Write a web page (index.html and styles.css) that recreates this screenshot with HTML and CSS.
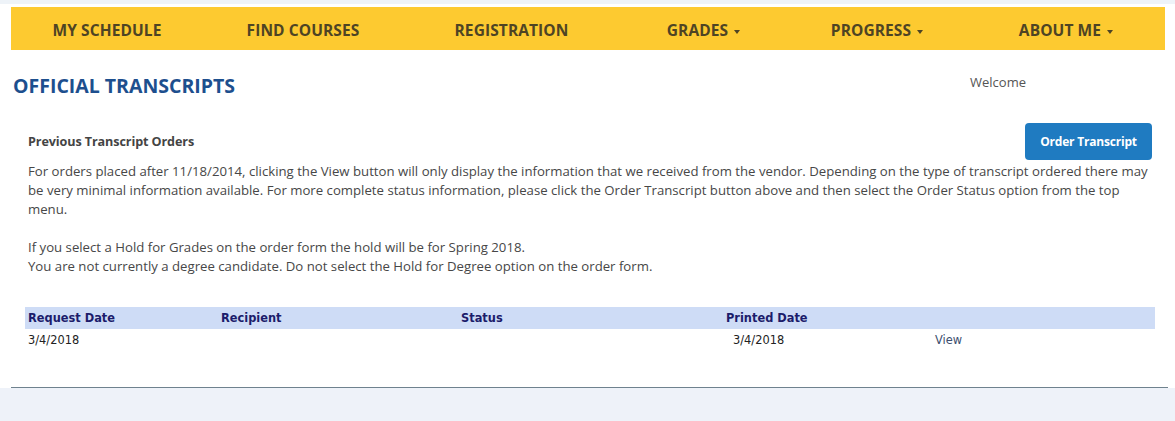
FILE: index.html
```html
<!DOCTYPE html>
<html>
<head>
<meta charset="utf-8">
<link rel="stylesheet" href="styles.css">
</head>
<body>
<div class="topstrip"></div>
<nav class="navbar">
  <a class="nav-item">MY SCHEDULE</a>
  <a class="nav-item">FIND COURSES</a>
  <a class="nav-item">REGISTRATION</a>
  <a class="nav-item">GRADES<span class="caret"></span></a>
  <a class="nav-item">PROGRESS<span class="caret"></span></a>
  <a class="nav-item">ABOUT ME<span class="caret"></span></a>
</nav>
<div class="page">
  <div class="title-row">
    <h1 class="page-title">OFFICIAL TRANSCRIPTS</h1>
    <div class="welcome">Welcome</div>
  </div>
  <section class="content">
    <div class="orders-head">
      <h2 class="orders-title">Previous Transcript Orders</h2>
      <button class="btn-order">Order Transcript</button>
    </div>
    <p class="note">For orders placed after 11/18/2014, clicking the View button will only display the information that we received from the vendor. Depending on the type of transcript ordered there may be very minimal information available. For more complete status information, please click the Order Transcript button above and then select the Order Status option from the top menu.</p>
    <p class="note note-2">If you select a Hold for Grades on the order form the hold will be for Spring 2018.<br>You are not currently a degree candidate. Do not select the Hold for Degree option on the order form.</p>
    <table class="orders">
      <thead>
        <tr>
          <th class="c1">Request Date</th>
          <th class="c2">Recipient</th>
          <th class="c3">Status</th>
          <th class="c4">Printed Date</th>
          <th class="c5"></th>
        </tr>
      </thead>
      <tbody>
        <tr>
          <td class="c1">3/4/2018</td>
          <td class="c2"></td>
          <td class="c3"></td>
          <td class="c4 printed">3/4/2018</td>
          <td class="c5"><a class="view">View</a></td>
        </tr>
      </tbody>
    </table>
  </section>
</div>
<div class="divider"></div>
<div class="footer-bg"></div>
</body>
</html>
```

FILE: styles.css
```css
html, body {
  margin: 0;
  padding: 0;
  background: #ffffff;
  font-family: "Open Sans", "Noto Sans", sans-serif;
}

.topstrip {
  height: 4px;
  background: #eef3f8;
}

.navbar {
  margin: 3px 10px 0 11px;
  height: 43px;
  padding-top: 3px;
  box-sizing: border-box;
  background: #fdca30;
  display: grid;
  grid-template-columns: 192px 200px 217px 167px 180px 198px;
  align-items: center;
}

.nav-item {
  text-align: center;
  font-weight: 700;
  font-size: 15.5px;
  color: #4e4424;
  letter-spacing: 0.1px;
  white-space: nowrap;
}

.caret {
  display: inline-block;
  width: 0;
  height: 0;
  margin-left: 6px;
  vertical-align: middle;
  border-top: 4px solid #4e4424;
  border-left: 3.5px solid transparent;
  border-right: 3.5px solid transparent;
}

.page {
  padding: 0 20px 0 13px;
}

.title-row {
  display: flex;
  align-items: flex-start;
  margin-top: 22px;
}

.page-title {
  margin: 0;
  font-size: 19.5px;
  font-weight: 700;
  color: #1d4f8e;
  flex: 1;
}

.welcome {
  margin-right: 129px;
  margin-top: 1px;
  font-size: 13px;
  color: #555555;
}

.content {
  padding: 0 0 0 15px;
}

.orders-head {
  display: flex;
  justify-content: space-between;
  align-items: center;
  margin-top: 24px;
}

.orders-title {
  margin: 0;
  font-size: 12.6px;
  font-weight: 700;
  color: #444444;
  letter-spacing: -0.1px;
}

.btn-order {
  width: 127px;
  height: 37px;
  margin-right: 3px;
  border: none;
  border-radius: 4px;
  background: #1f7bc1;
  color: #ffffff;
  font-family: "Open Sans", "Noto Sans", sans-serif;
  font-weight: 700;
  font-size: 12px;
  letter-spacing: -0.2px;
}

.note {
  margin: 2px 0 0 0;
  max-width: 1125px;
  font-size: 13.2px;
  line-height: 19px;
  color: #474747;
}

.note-2 {
  margin-top: 19px;
}

.orders {
  margin-top: 31px;
  margin-left: -3px;
  width: 1130px;
  border-collapse: collapse;
  font-family: "DejaVu Sans", Verdana, sans-serif;
  font-size: 11.4px;
}

.orders th {
  background: #cedcf6;
  color: #1c1c6b;
  font-weight: 700;
  text-align: left;
  height: 22px;
  padding: 0 0 0 3px;
}

.orders td {
  color: #222222;
  height: 22px;
  padding: 0 0 0 3px;
}

.c1 { width: 190px; }
.c2 { width: 237px; }
.c3 { width: 262px; }
.c4 { width: 199px; }

.orders td.printed {
  padding-left: 10px;
}

.view {
  color: #3c4e6e;
}

.divider {
  margin: 36px 7px 0 11px;
  border-top: 1px solid #6f828e;
}

.footer-bg {
  height: 33px;
  background: #eef2f9;
}
```
